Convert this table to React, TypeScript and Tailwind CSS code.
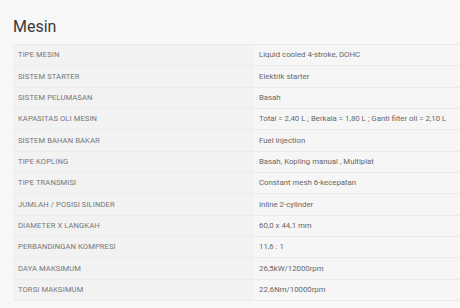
const specs: [string, string][] = [
  ["TIPE MESIN", "Liquid cooled 4-stroke, DOHC"],
  ["SISTEM STARTER", "Elektrik starter"],
  ["SISTEM PELUMASAN", "Basah"],
  ["KAPASITAS OLI MESIN", "Total = 2,40 L ; Berkala = 1,80 L ; Ganti filter oli = 2,10 L"],
  ["SISTEM BAHAN BAKAR", "Fuel Injection"],
  ["TIPE KOPLING", "Basah, Kopling manual , Multiplat"],
  ["TIPE TRANSMISI", "Constant mesh 6-kecepatan"],
  ["JUMLAH / POSISI SILINDER", "Inline 2-cylinder"],
  ["DIAMETER X LANGKAH", "60,0 x 44,1 mm"],
  ["PERBANDINGAN KOMPRESI", "11,6 : 1"],
  ["DAYA MAKSIMUM", "26,5kW/12000rpm"],
  ["TORSI MAKSIMUM", "22.6Nm/10000rpm"],
];

export default function App() {
  return (
    <div className="w-[460px] h-[308px] overflow-hidden bg-[#f7f7f7] font-['Roboto',sans-serif]">
      <h2 className="pl-[13px] pt-[17px] h-[44px] text-[16px] leading-[20px] text-[#3a3a3a]">Mesin</h2>

      <div className="ml-[13px] border-t border-[#ebebeb]">
        {specs.map(([label, value]) => (
          <div key={label} className="flex h-[21.33px] border-b border-[#ebebeb]">
            <div className="w-[239px] shrink-0 flex items-center pl-[5px] bg-[#f2f2f2] text-[7.6px] text-[#777] tracking-[0.1px]">
              {label}
            </div>
            <div className="flex-1 flex items-center pl-[6px] bg-[#f6f6f6] border-l border-[#efefef] text-[7.8px] text-[#666] whitespace-nowrap">
              {value}
            </div>
          </div>
        ))}
      </div>
    </div>
  );
}
